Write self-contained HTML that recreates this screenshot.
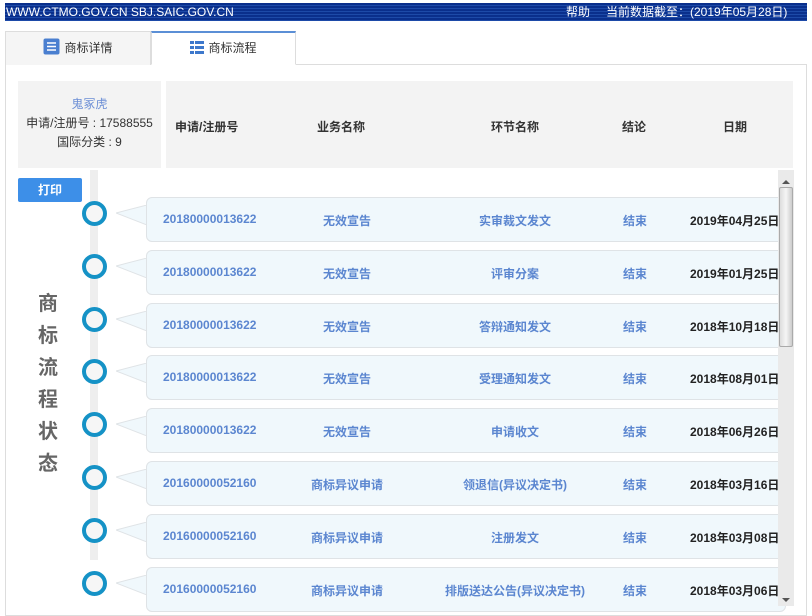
<!DOCTYPE html>
<html><head><meta charset="utf-8"><style>
*{margin:0;padding:0;box-sizing:border-box}
body{width:812px;height:616px;background:#fff;font-family:"Liberation Sans","Noto Sans CJK SC",sans-serif;position:relative;overflow:hidden;font-size:12px}
.top{position:absolute;left:5px;top:3px;width:802px;height:18px;background:repeating-linear-gradient(#0a2f8c 0,#0a2f8c 2px,#1d4aa8 2px,#1d4aa8 3px);color:#fff;font-size:12px;line-height:19px}
.tabs{position:absolute;left:5px;top:31px;width:802px;height:34px;border-bottom:1px solid #ddd}
.tab1{position:absolute;left:0;top:0;width:146px;height:34px;background:#f5f5f5;border:1px solid #ddd;border-bottom:none;text-align:center;line-height:32px;color:#333}
.tab2{position:absolute;left:146px;top:0;width:145px;height:34px;background:#fff;border:1px solid #ddd;border-top:2px solid #5b8fd6;border-bottom:1px solid #fff;text-align:center;line-height:30px;color:#333}
.panel{position:absolute;left:5px;top:64px;width:802px;height:552px;border:1px solid #ddd;border-top:none}
.info{position:absolute;left:18px;top:81px;width:143px;height:87px;background:#f3f3f3;text-align:center;line-height:19px;padding-top:14px;color:#333}
.head{position:absolute;left:166px;top:81px;width:627px;height:87px;background:#f3f3f3;font-weight:bold;color:#333}
.head span{position:absolute;top:37px}
.btn{position:absolute;left:18px;top:178px;width:64px;height:24px;background:#3d8fe8;color:#fff;font-weight:bold;text-align:center;line-height:24px;border-radius:2px}
.vline{position:absolute;left:90px;top:170px;width:8px;height:390px;background:#eee}
.vt{position:absolute;left:36px;top:288px;width:24px;font-size:20px;font-weight:bold;color:#666;line-height:32px;text-align:center}
.c{position:absolute;left:82px;width:25px;height:25px;border:4px solid #1592c6;border-radius:50%;background:#f6f6f6}
.b{position:absolute;left:146px;width:640px;height:45px;background:#f0f8fc;border:1px solid #dfe3e6;border-radius:6px;color:#5b86d0;font-weight:bold}
.b span{position:absolute;top:14px;white-space:nowrap}
.b .m{text-align:center}
.b .d{color:#222}
.ar{position:absolute;left:116px;width:31px;height:20px}
.sb{position:absolute;left:778px;top:170px;width:16px;height:436px;background:#eaeaea}
.thumb{position:absolute;left:779px;top:187px;width:14px;height:160px;background:linear-gradient(90deg,#ddd,#f5f5f5,#ccc);border:1px solid #aaa;border-radius:2px}
</style></head><body>
<div class="top"><span style="position:absolute;left:1px">WWW.CTMO.GOV.CN SBJ.SAIC.GOV.CN</span><span style="position:absolute;left:561px">帮助</span><span style="position:absolute;left:601px">当前数据截至：(2019年05月28日)</span></div>
<div class="tabs">
<div class="tab1"><svg width="17" height="17" style="vertical-align:-3px;margin-right:4px"><rect x="0.5" y="0.5" width="16" height="16" rx="2" fill="#4a7fd0"/><path d="M4 5h9M4 8.5h9M4 12h9" stroke="#fff" stroke-width="1.5"/></svg>商标详情</div>
<div class="tab2"><svg width="14" height="13" style="vertical-align:-2px;margin-right:4px"><path d="M0 0h4v3H0zM5 0h9v3H5zM0 5h4v3H0zM5 5h9v3H5zM0 10h4v3H0zM5 10h9v3H5z" fill="#3d78cc"/></svg>商标流程</div>
</div>
<div class="panel"></div>
<div class="info"><div style="color:#6c8fd6">鬼冢虎</div><div>申请/注册号 : 17588555</div><div>国际分类 : 9</div></div>
<div class="head"><span style="left:9px">申请/注册号</span><span style="left:151px">业务名称</span><span style="left:325px">环节名称</span><span style="left:456px">结论</span><span style="left:557px">日期</span></div>
<div class="btn">打印</div>
<div class="vline"></div>
<div class="vt">商<br>标<br>流<br>程<br>状<br>态</div>
<div id="rows"></div>
<div class="sb"></div><div class="thumb"></div>
<div style="position:absolute;left:782px;top:176px;width:0;height:0;border:4px solid transparent;border-bottom-color:#555"></div>
<div style="position:absolute;left:782px;top:598px;width:0;height:0;border:4px solid transparent;border-top-color:#555"></div>
<script>
var d=[["20180000013622","无效宣告","实审裁文发文","2019年04月25日"],["20180000013622","无效宣告","评审分案","2019年01月25日"],["20180000013622","无效宣告","答辩通知发文","2018年10月18日"],["20180000013622","无效宣告","受理通知发文","2018年08月01日"],["20180000013622","无效宣告","申请收文","2018年06月26日"],["20160000052160","商标异议申请","领退信(异议决定书)","2018年03月16日"],["20160000052160","商标异议申请","注册发文","2018年03月08日"],["20160000052160","商标异议申请","排版送达公告(异议决定书)","2018年03月06日"]];
var h="";
d.forEach(function(r,i){var y=197+i*52.8;
h+='<div class="c" style="top:'+(y+4)+'px"></div>';
h+='<svg class="ar" style="top:'+(y+8)+'px" viewBox="0 0 31 20"><path d="M31 0L0 8L31 20" fill="#f0f8fc" stroke="#dfe3e6"/></svg>';
h+='<div class="b" style="top:'+y+'px"><span style="left:16px">'+r[0]+'</span><span class="m" style="left:120px;width:160px">'+r[1]+'</span><span class="m" style="left:268px;width:200px">'+r[2]+'</span><span style="left:476px">结束</span><span class="d" style="left:543px">'+r[3]+'</span></div>';});
document.getElementById("rows").innerHTML=h;
</script>
</body></html>
